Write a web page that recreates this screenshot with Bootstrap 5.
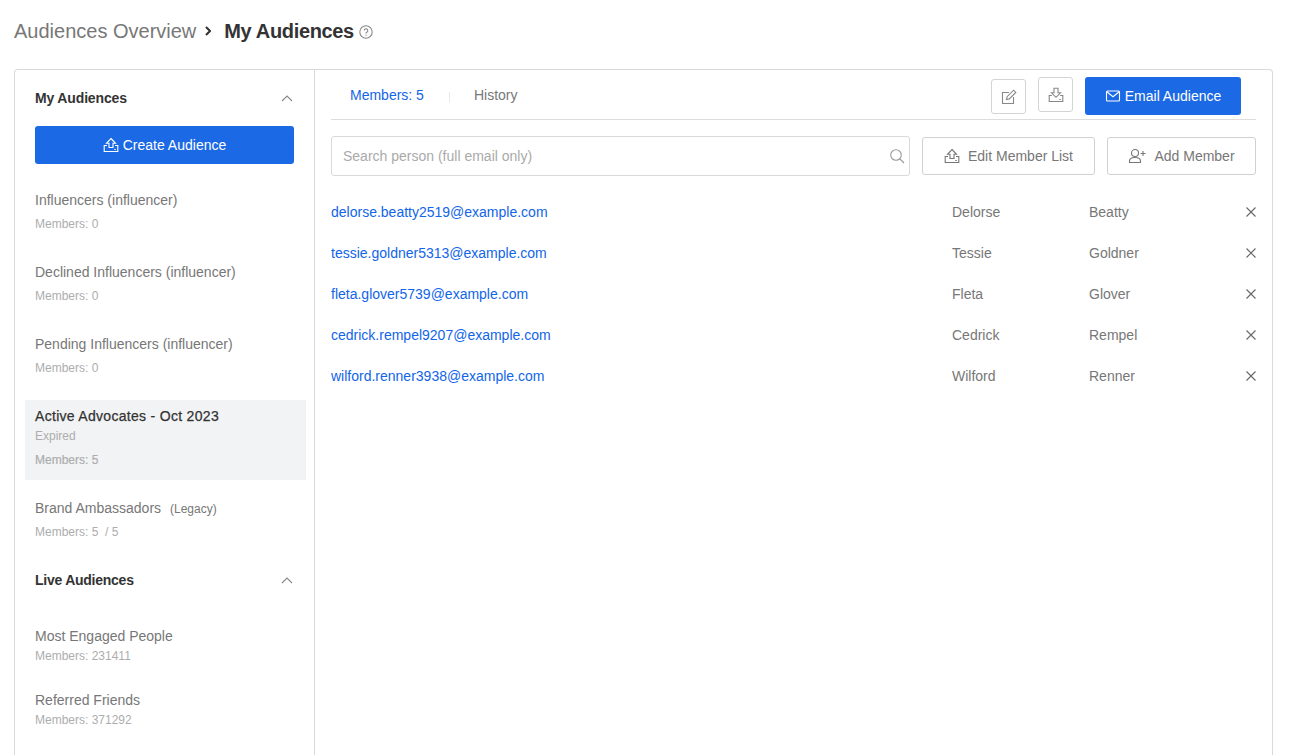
<!DOCTYPE html>
<html lang="en">
<head>
  <meta charset="UTF-8" />
  <meta name="viewport" content="width=device-width, initial-scale=1.0"/>
  <title>My Audiences</title>
  <link href="https://cdn.jsdelivr.net/npm/bootstrap@5.3.2/dist/css/bootstrap.min.css" rel="stylesheet">
  <style>
    html, body { height: 100%; overflow: hidden; }
    body { font-family: "Liberation Sans", Arial, sans-serif; font-size: 14px; color: #777; background: #fff; }
    svg { flex: none; fill: none; stroke: currentColor; stroke-width: 1.1; }

    .page-head { height: 69px; padding: 0 0 8px 14px; align-items: center; line-height: 24px; }
    .crumb { font-size: 20px; color: #777; }
    .crumb-sep { margin: 0 13px 0 9px; color: #333; }
    .crumb-current { font-size: 20px; font-weight: 700; letter-spacing: -.35px; color: #333; }
    .help-icon { margin: 2px 0 0 5px; color: #888; }

    .shell { width: 1259px; height: calc(100vh - 69px); margin-left: 14px; border: 1px solid #d9d9d9; border-bottom: 0; border-radius: 4px 4px 0 0; }
    .sidebar { width: 300px; border-right: 1px solid #d9d9d9; padding: 18px 8px 0 10px; }
    .side-head { height: 20px; padding: 0 13px 0 10px; font-weight: 700; letter-spacing: -.15px; color: #333; line-height: 20px; }
    .side-head svg { color: #888; }
    .btn-brand { background: #1b69e4; border: 0; border-radius: 3px; color: #fff; font-size: 14px; line-height: 20px; }
    .btn-brand:hover { background: #1b69e4; color: #fff; }
    .btn-create { width: 259px; height: 38px; margin: 18px 0 20px 10px; }
    .aud { padding: 6px 10px 10px; margin-bottom: 12px; line-height: 20px; }
    .aud-sub { font-size: 12px; color: #adadad; }
    .aud-count { margin-top: 4px; }
    .aud.active { background: #f2f3f5; }
    .aud.active .aud-name { color: #333; letter-spacing: .3px; -webkit-text-stroke: .25px #333; }
    .aud.active .aud-count { -webkit-text-stroke: .2px #adadad; }
    .legacy { font-size: 12px; line-height: 1; margin-left: 5px; }
    .live-head { margin: 18px 0 30px; letter-spacing: -.25px; }
    .aud-live { margin-bottom: 8px; }
    .aud-live .aud-count { margin-top: 0; }

    .main { padding: 0 16px; min-width: 0; }
    .tabs { height: 50px; border-bottom: 1px solid #ddd; }
    .tab-link { margin-top: 15px; color: #777; line-height: 20px; text-decoration: none; }
    .tab-active { color: #1165e8; margin-left: 19px; }
    .tab-divider { width: 1px; height: 10px; background: #e8e8e8; margin: 22px 24px 0 25px; }
    .btn-icon { width: 35px; height: 35px; padding: 0; border: 1px solid #d4d4d4; border-radius: 3px; color: #888; }
    .btn-edit-icon { margin-top: 9px; }
    .btn-dl-icon { margin: 7px 12px 0; }
    .btn-email { width: 156px; height: 38px; margin: 7px 15px 0 0; }
    .toolbar { margin-top: 16px; margin-bottom: 15px; }
    .search { width: 579px; height: 40px; }
    .search .form-control { height: 40px; padding: 0 30px 0 11px; font-size: 14px; border-color: #d9d9d9; border-radius: 3px; color: #777; box-shadow: none; }
    .search .form-control::placeholder { color: #aaa; }
    .search svg { position: absolute; right: 5px; top: 12px; color: #999; }
    .btn-outline { height: 38px; border: 1px solid #d0d0d0; border-radius: 3px; color: #777; font-size: 14px; line-height: 20px; }
    .btn-list { width: 173px; margin-left: 12px; }
    .btn-add { width: 149px; margin-left: 12px; }
    .member { height: 41px; line-height: 20px; }
    .member a { width: 621px; color: #1165e8; text-decoration: none; }
    .member .first { width: 137px; }
    .member svg { margin-left: auto; color: #666; }
  </style>
</head>
<body>

  <!-- Page heading -->
  <div class="page-head d-flex">
    <span class="crumb">Audiences Overview</span>
    <svg class="crumb-sep" width="6" height="10" viewBox="0 0 6 10" style="stroke-width:2"><path d="M1 1l4 4-4 4"/></svg>
    <span class="crumb-current">My Audiences</span>
    <svg class="help-icon" width="14" height="14" viewBox="0 0 14 14"><circle cx="7" cy="7" r="6.2"/><path d="M5.2 5.5a1.8 1.8 0 1 1 2.8 1.5c-.7.4-1 .8-1 1.500"/><path d="M7 9.700v1"/></svg>
  </div>

  <div class="shell d-flex">

    <!-- Sidebar -->
    <aside class="sidebar">
      <div class="side-head d-flex justify-content-between align-items-center">
        <span>My Audiences</span>
        <svg width="12" height="7" viewBox="0 0 12 7"><path d="M1 6l5-5 5 5"/></svg>
      </div>
      <button class="btn btn-brand btn-create d-flex align-items-center justify-content-center gap-1 p-0">
        <svg width="16" height="16" viewBox="0 0 16 16"><path d="M8 1.500l4.500 4.800H10V10.500H6V6.300H3.500z"/><path d="M4 8.500H1.200v6h13.600v-6H12"/><path d="M11.300 12.500h1.500"/></svg>
        Create Audience
      </button>
      <div class="aud"><div class="aud-name">Influencers (influencer)</div><div class="aud-sub aud-count">Members: 0</div></div>
      <div class="aud"><div class="aud-name">Declined Influencers (influencer)</div><div class="aud-sub aud-count">Members: 0</div></div>
      <div class="aud"><div class="aud-name">Pending Influencers (influencer)</div><div class="aud-sub aud-count">Members: 0</div></div>
      <div class="aud active"><div class="aud-name">Active Advocates - Oct 2023</div><div class="aud-sub">Expired</div><div class="aud-sub aud-count">Members: 5</div></div>
      <div class="aud"><div class="aud-name">Brand Ambassadors <span class="legacy">(Legacy)</span></div><div class="aud-sub aud-count">Members: 5 &nbsp;/ 5</div></div>
      <div class="side-head live-head d-flex justify-content-between align-items-center">
        <span>Live Audiences</span>
        <svg width="12" height="7" viewBox="0 0 12 7"><path d="M1 6l5-5 5 5"/></svg>
      </div>
      <div class="aud aud-live"><div class="aud-name">Most Engaged People</div><div class="aud-sub aud-count">Members: 231411</div></div>
      <div class="aud aud-live"><div class="aud-name">Referred Friends</div><div class="aud-sub aud-count">Members: 371292</div></div>
    </aside>

    <!-- Main panel -->
    <main class="main flex-grow-1">
      <div class="tabs d-flex align-items-start">
        <a class="tab-link tab-active" href="#">Members: 5</a>
        <span class="tab-divider"></span>
        <a class="tab-link" href="#">History</a>
        <button class="btn btn-icon btn-edit-icon ms-auto d-flex align-items-center justify-content-center">
          <svg width="16" height="16" viewBox="0 0 16 16"><path d="M12.500 8v6.500H1.500V3.500H8"/><path d="M5.500 10.500l.6-2.800L12.600 1.200l2.200 2.200-6.500 6.500z"/></svg>
        </button>
        <button class="btn btn-icon btn-dl-icon d-flex align-items-center justify-content-center">
          <svg width="16" height="16" viewBox="0 0 16 16"><path d="M6 1.200h4v4.600h2.500L8 10.300 3.500 5.800H6z"/><path d="M4 8.500H1.200v6h13.600v-6H12"/><path d="M11.300 12.500h1.500"/></svg>
        </button>
        <button class="btn btn-brand btn-email d-flex align-items-center justify-content-center gap-1 p-0">
          <svg width="16" height="16" viewBox="0 0 16 16"><rect x="1.500" y="3" width="13" height="10" rx="1"/><path d="M1.800 3.800L8 8.800l6.200-5"/></svg>
          Email Audience
        </button>
      </div>

      <div class="toolbar d-flex align-items-center">
        <div class="search position-relative">
          <input class="form-control" type="text" placeholder="Search person (full email only)">
          <svg width="16" height="16" viewBox="0 0 16 16"><circle cx="7" cy="7" r="5.300"/><path d="M11 11l4 4"/></svg>
        </div>
        <button class="btn btn-outline btn-list d-flex align-items-center justify-content-center gap-2 p-0">
          <svg width="16" height="16" viewBox="0 0 16 16"><path d="M8 1.500l4.500 4.800H10V10.500H6V6.300H3.500z"/><path d="M4 8.500H1.200v6h13.600v-6H12"/><path d="M11.300 12.500h1.500"/></svg>
          Edit Member List
        </button>
        <button class="btn btn-outline btn-add d-flex align-items-center justify-content-center gap-2 p-0">
          <svg width="18" height="16" viewBox="0 0 18 16"><circle cx="7" cy="5" r="3.500"/><path d="M1.500 14.500v-1.500c0-2 2-3.500 5.500-3.500s5.500 1.500 5.500 3.500v1.500z"/><path d="M12.500 5.500h5M15 3v5"/></svg>
          Add Member
        </button>
      </div>

      <div class="member d-flex align-items-center"><a href="#">delorse.beatty2519@example.com</a><span class="first">Delorse</span><span>Beatty</span><svg width="10" height="10" viewBox="0 0 10 10"><path d="M.5.5l9 9M9.500.5l-9 9"/></svg></div>
      <div class="member d-flex align-items-center"><a href="#">tessie.goldner5313@example.com</a><span class="first">Tessie</span><span>Goldner</span><svg width="10" height="10" viewBox="0 0 10 10"><path d="M.5.5l9 9M9.500.5l-9 9"/></svg></div>
      <div class="member d-flex align-items-center"><a href="#">fleta.glover5739@example.com</a><span class="first">Fleta</span><span>Glover</span><svg width="10" height="10" viewBox="0 0 10 10"><path d="M.5.5l9 9M9.500.5l-9 9"/></svg></div>
      <div class="member d-flex align-items-center"><a href="#">cedrick.rempel9207@example.com</a><span class="first">Cedrick</span><span>Rempel</span><svg width="10" height="10" viewBox="0 0 10 10"><path d="M.5.5l9 9M9.500.5l-9 9"/></svg></div>
      <div class="member d-flex align-items-center"><a href="#">wilford.renner3938@example.com</a><span class="first">Wilford</span><span>Renner</span><svg width="10" height="10" viewBox="0 0 10 10"><path d="M.5.5l9 9M9.500.5l-9 9"/></svg></div>
    </main>
  </div>

  <script src="https://cdn.jsdelivr.net/npm/bootstrap@5.3.2/dist/js/bootstrap.bundle.min.js"></script>
</body>
</html>
